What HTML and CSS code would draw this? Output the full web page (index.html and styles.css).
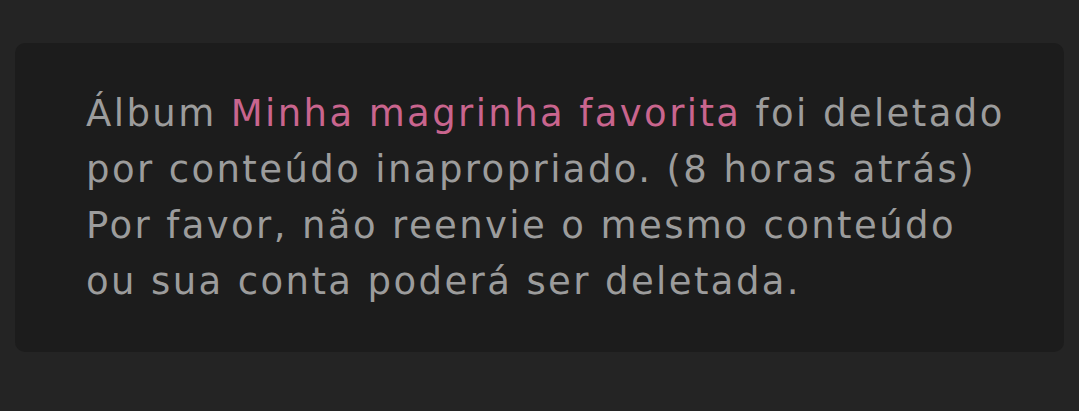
FILE: index.html
```html
<!DOCTYPE html>
<html lang="pt-BR">
<head>
    <meta charset="UTF-8">
    <meta name="viewport" content="width=device-width, initial-scale=1.0">
    <title>Notificação</title>
    <link rel="stylesheet" href="styles.css">
</head>
<body>
    <div class="notice">
        <p class="notice-text">
            Álbum <span class="album-name">Minha magrinha favorita</span> foi deletado<br>
            por conteúdo inapropriado. (8 horas atrás)<br>
            Por favor, não reenvie o mesmo conteúdo<br>
            ou sua conta poderá ser deletada.
        </p>
    </div>
</body>
</html>
```

FILE: styles.css
```css
/* Page */
body {
    margin: 0;
    background: #242424;
    font-family: "DejaVu Sans", "Noto Sans", sans-serif;
    padding: 43px 15px 0 15px;
}

/* Notification card */
.notice {
    background: #1c1c1c;
    border-radius: 10px;
    padding: 43px 40px 42px 71px;
}

.notice-text {
    margin: 0;
    font-size: 37px;
    line-height: 56px;
    letter-spacing: 2.4px;
    color: #9c9c9c;
    white-space: nowrap;
}

.album-name {
    color: #c9658e;
}
```
